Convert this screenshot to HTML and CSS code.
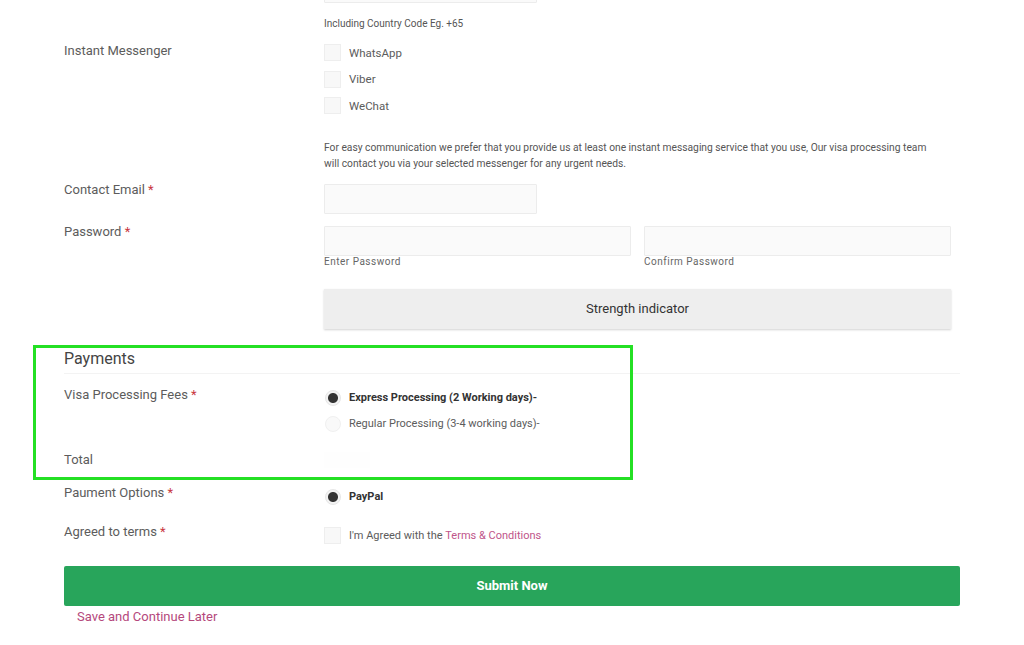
FILE: index.html
```
<!DOCTYPE html>
<html lang="en">
<head>
    <meta charset="UTF-8" />
    <meta name="viewport" content="width=device-width, initial-scale=1.0" />
    <title>Visa Application</title>
    <link rel="stylesheet" href="styles.css">
</head>
<body>
    <div class="form">
        <div class="row row-phone">
            <div class="label"></div>
            <div class="field">
                <input type="text" class="input input-short" />
                <p class="hint hint-phone">Including Country Code Eg. +65</p>
            </div>
        </div>

        <div class="row row-messenger">
            <div class="label">Instant Messenger</div>
            <div class="field">
                <label class="check"><span class="box"></span>WhatsApp</label>
                <label class="check"><span class="box"></span>Viber</label>
                <label class="check"><span class="box"></span>WeChat</label>
            </div>
        </div>

        <div class="row row-help">
            <div class="label"></div>
            <p class="field help">For easy communication we prefer that you provide us at least one instant messaging service that you use, Our visa processing team will contact you via your selected messenger for any urgent needs.</p>
        </div>

        <div class="row row-email">
            <div class="label shift">Contact Email <span class="req">*</span></div>
            <div class="field">
                <input type="text" class="input input-short" />
            </div>
        </div>

        <div class="row row-password">
            <div class="label shift">Password <span class="req">*</span></div>
            <div class="field pw-pair">
                <div>
                    <input type="password" class="input" />
                    <span class="sub">Enter Password</span>
                </div>
                <div>
                    <input type="password" class="input" />
                    <span class="sub">Confirm Password</span>
                </div>
            </div>
        </div>

        <div class="row row-strength">
            <div class="label"></div>
            <div class="field strength">Strength indicator</div>
        </div>

        <h2 class="section">Payments</h2>

        <div class="row row-fees">
            <div class="label">Visa Processing Fees <span class="req">*</span></div>
            <div class="field">
                <label class="radio"><span class="dot on"></span><b>Express Processing (2 Working days)-</b></label>
                <label class="radio"><span class="dot"></span>Regular Processing (3-4 working days)-</label>
            </div>
        </div>

        <div class="row row-total">
            <div class="label">Total</div>
            <div class="field"><span class="total-box"></span></div>
        </div>

        <div class="row row-options">
            <div class="label">Paument Options <span class="req">*</span></div>
            <div class="field">
                <label class="radio"><span class="dot on"></span><b>PayPal</b></label>
            </div>
        </div>

        <div class="row row-terms">
            <div class="label">Agreed to terms <span class="req">*</span></div>
            <div class="field">
                <label class="check check-terms"><span class="box"></span>I'm Agreed with the&nbsp;<a href="#" class="link">Terms &amp; Conditions</a></label>
            </div>
        </div>

        <button class="submit">Submit Now</button>
        <a href="#" class="save">Save and Continue Later</a>

        <div class="highlight-box"></div>
    </div>
</body>
</html>
```

FILE: styles.css
```
body {
    margin: 0;
    padding: 0;
    background: #fff;
    font-family: Roboto, "Liberation Sans", Arial, sans-serif;
    color: #5a5a5a;
}
.form {
    display: flow-root;
    position: relative;
    width: 896px;
    margin-left: 64px;
}
.row {
    display: grid;
    grid-template-columns: 260px 627px;
    align-items: start;
}
.label {
    font-size: 13px;
    line-height: 18px;
    color: #5c5c5c;
}
.label.shift {
    margin-top: -3px;
}
.req {
    color: #c9383f;
}
.field {
    margin: 0;
}
.input {
    display: block;
    box-sizing: border-box;
    width: 100%;
    height: 30px;
    margin: 0;
    border: 1px solid #ececec;
    background: #fafafa;
    border-radius: 1px;
}
.input-short {
    width: 213px;
}

/* phone */
.row-phone {
    margin-top: -27px;
}
.hint {
    margin: 0;
    font-size: 10px;
    line-height: 14px;
    color: #555;
}
.hint-phone {
    margin-top: 14px;
}

/* messenger */
.row-messenger {
    margin-top: 11px;
}
.row-messenger .field {
    padding-top: 2px;
}
.check {
    display: flex;
    align-items: center;
    height: 17px;
    margin-bottom: 9.5px;
    font-size: 11.5px;
    color: #5c5c5c;
}
.box {
    display: inline-block;
    box-sizing: border-box;
    width: 17px;
    height: 17px;
    margin-right: 8px;
    border: 1px solid #eee;
    background: #f8f8f8;
}

.row-help {
    margin-top: 16px;
}
.help {
    max-width: 606px;
    font-size: 10.25px;
    line-height: 16px;
    color: #555;
}

.row-email {
    margin-top: 12px;
}
.row-password {
    margin-top: 12px;
}
.pw-pair {
    display: grid;
    grid-template-columns: 307px 307px;
    column-gap: 13px;
}
.sub {
    display: block;
    font-size: 10px;
    line-height: 12px;
    letter-spacing: 0.5px;
    color: #666;
}

.row-strength {
    margin-top: 21px;
}
.strength {
    height: 40px;
    line-height: 40px;
    text-align: center;
    font-size: 13px;
    color: #333;
    background: #eee;
    box-shadow: 0 1px 2px rgba(0, 0, 0, 0.18);
}

.section {
    margin: 20px 0 0;
    padding-bottom: 4px;
    font-size: 16px;
    line-height: 20px;
    font-weight: 400;
    color: #444;
    border-bottom: 1px solid #f3f3f3;
}

.row-fees {
    margin-top: 11px;
}
.row-fees .label {
    margin-top: 1px;
}
.radio {
    display: flex;
    align-items: center;
    height: 26px;
    font-size: 11px;
    color: #5c5c5c;
}
.radio b {
    font-weight: 700;
    color: #333;
}
.dot {
    display: inline-block;
    box-sizing: border-box;
    width: 16px;
    height: 16px;
    margin-left: 1px;
    margin-right: 8px;
    border-radius: 50%;
    border: 1px solid #f0f0f0;
    background: #f9f9f9;
}
.dot.on {
    background: radial-gradient(circle, #333 0, #333 4.5px, #f3f3f3 5.5px);
    border-color: #e6e6e6;
}

.row-total {
    margin-top: 14px;
}
.total-box {
    display: block;
    width: 46px;
    height: 16px;
    margin-top: 1px;
    background: #fefefe;
}

.row-options {
    margin-top: 15px;
}
.row-terms {
    margin-top: 13px;
}
.check-terms {
    height: 25px;
    margin: 0;
    font-size: 11px;
}
.link {
    color: #c0558a;
    text-decoration: none;
}

.submit {
    display: block;
    width: 896px;
    height: 40px;
    margin-top: 18px;
    border: 0;
    border-radius: 2px;
    background: #28a55b;
    color: #fff;
    font-family: Roboto, "Liberation Sans", Arial, sans-serif;
    font-size: 13px;
    font-weight: 700;
    cursor: pointer;
}
.save {
    display: block;
    margin-top: 2px;
    padding-left: 13px;
    font-size: 13px;
    line-height: 18px;
    color: #b5487c;
    text-decoration: none;
}

/* annotation frame over the payments block */
.highlight-box {
    position: absolute;
    left: -31px;
    top: 345px;
    width: 594px;
    height: 129px;
    border: 3px solid #24e024;
    pointer-events: none;
}
```
